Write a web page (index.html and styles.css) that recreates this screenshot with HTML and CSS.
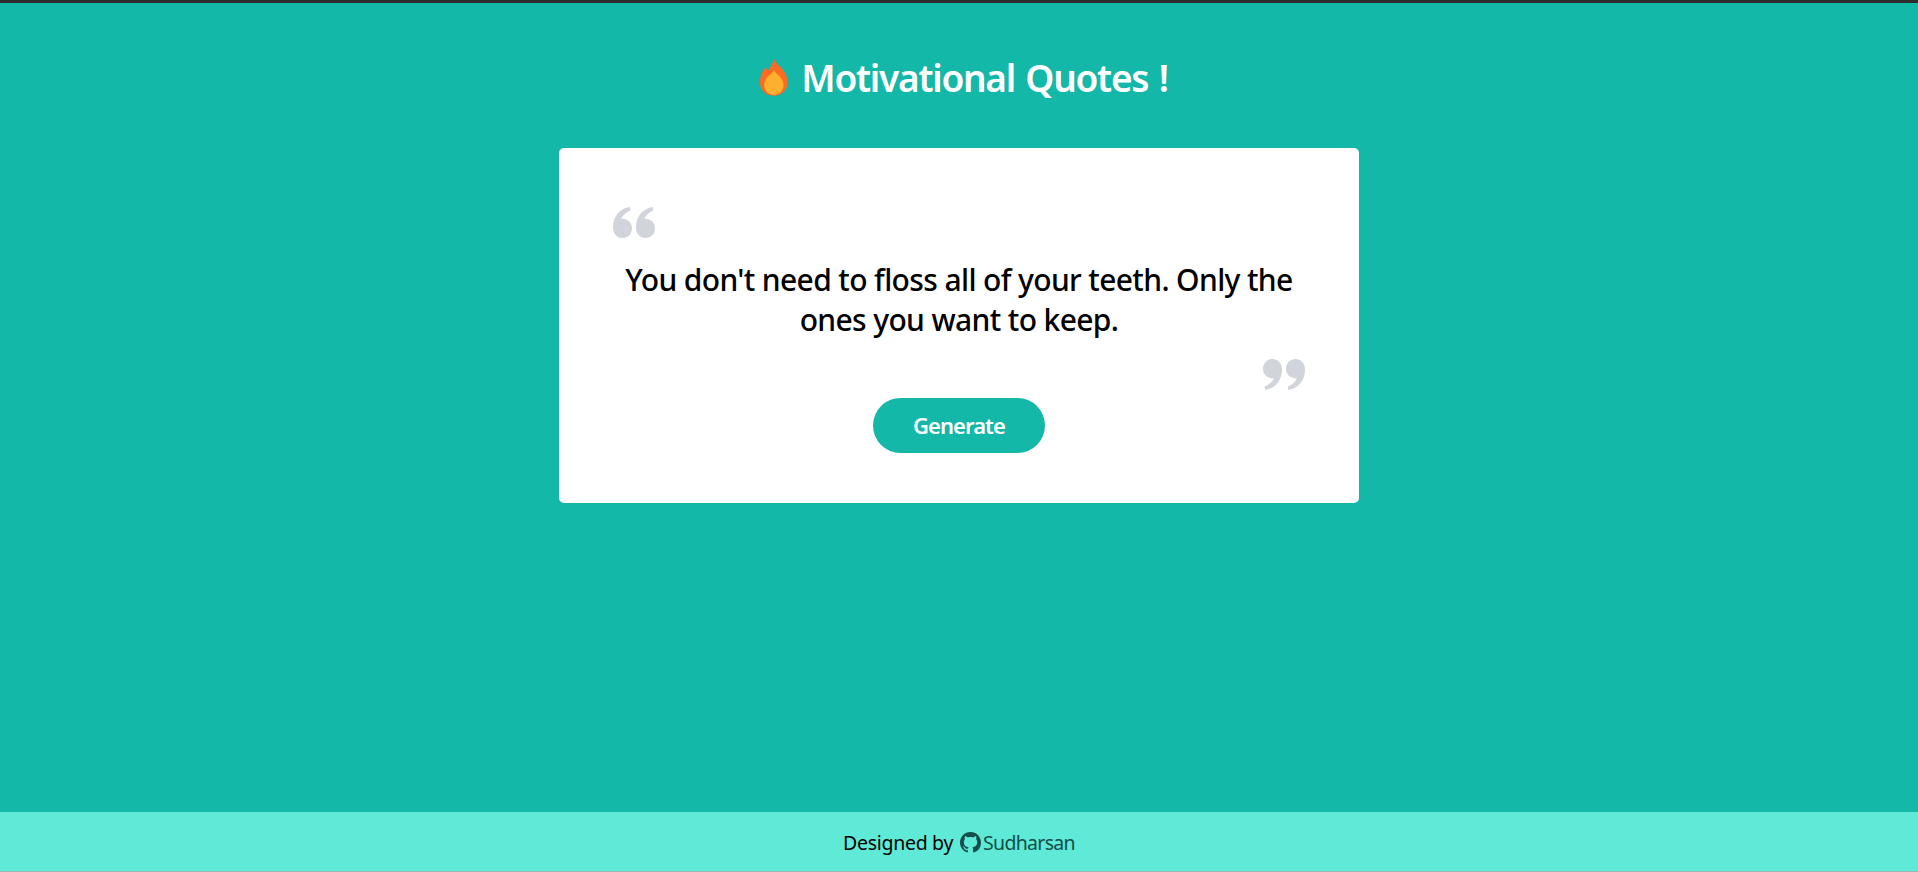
FILE: index.html
```html
<!DOCTYPE html>
<html lang="en">
<head>
<meta charset="utf-8">
<title>Motivational Quotes</title>
<link rel="stylesheet" href="styles.css">
</head>
<body>
<main class="page">
  <h1 class="title">
    <svg class="flame" viewBox="0 0 28 37"><path fill="#ff6a23" d="M14.2 0C15.5 6 27.5 10 27.5 23.500C27.500 31.500 21.500 36.700 13.700 36.700C6 36.700 0 31.500 0 23.500C0 17 2.500 11 6 8L7.300 12.500C9.500 10 12.500 5 14.200 0Z"/><path fill="#ffb02e" d="M14 11C15.500 15 23.500 18 23.500 26C23.500 32 19 35.800 13.800 35.800C8.500 35.800 4.200 32 4.200 26C4.200 18 12.500 15 14 11Z"/></svg>
    <span class="title-text">Motivational Quotes !</span>
  </h1>
  <section class="card">
    <svg class="mark" viewBox="0 0 42 31"><g id="quote"><path id="comma" d="M16.800 0L17.300 3.400C13 5 9.800 8 8.200 11.800C14 11.300 19 15 19 21.200C19 27 14.800 31 9.500 31C3.800 31 0 26.700 0 20.500C0 9.500 6.500 1.500 16.800 0Z"/><use href="#comma" x="23"/></g></svg>
    <p class="quote">You don't need to floss all of your teeth. Only the<br>ones you want to keep.</p>
    <svg class="mark mark-end" viewBox="0 0 42 31"><use href="#quote" transform="rotate(180 21 15.5)"/></svg>
    <button class="generate">Generate</button>
  </section>
</main>
<footer class="footer">
  <span class="by">Designed by</span>
  <a class="author"><svg class="github" viewBox="0 0 16 16"><path d="M8 0C3.58 0 0 3.58 0 8c0 3.54 2.290 6.530 5.470 7.590.4.070.55-.17.55-.38 0-.19-.01-.82-.01-1.490-2.010.37-2.530-.49-2.690-.94-.09-.23-.48-.94-.82-1.130-.28-.15-.68-.52-.01-.53.63-.01 1.080.58 1.230.82.72 1.210 1.870.87 2.330.66.070-.52.28-.87.51-1.070-1.780-.2-3.640-.89-3.640-3.950 0-.87.31-1.590.82-2.150-.08-.2-.36-1.020.08-2.120 0 0 .67-.21 2.200.82.64-.18 1.320-.27 2-.27s1.360.09 2 .27c1.530-1.040 2.200-.82 2.200-.82.44 1.100.16 1.920.08 2.120.51.56.82 1.270.82 2.150 0 3.070-1.870 3.750-3.650 3.950.29.25.54.73.54 1.480 0 1.070-.01 1.930-.01 2.200 0 .21.15.46.55.38A8.010 8.010 0 0 0 16 8c0-4.420-3.580-8-8-8z"/></svg><span class="name">Sudharsan</span></a>
</footer>
</body>
</html>
```
FILE: styles.css
```css
* { box-sizing: border-box; }
body {
  margin: 0;
  height: 872px;
  display: flex;
  flex-direction: column;
  overflow: hidden;
  background: #14b8a8;
  border-top: 3px solid #2d2d2d;
  font-family: "Segoe UI", "Noto Sans", sans-serif;
}
.page { flex: 1; display: flex; flex-direction: column; align-items: center; }
.title {
  display: flex;
  margin: 50px 0 0;
  padding-left: 10px;
  height: 50px;
  gap: 13px;
  color: #fff;
  font-size: 37px;
  line-height: 50px;
  font-weight: 600;
}
.flame { width: 28px; height: 37px; margin-top: 6px; }
.title-text { letter-spacing: -1.25px; word-spacing: 2px; white-space: nowrap; }
.card {
  width: 800px;
  height: 355px;
  margin-top: 45px;
  padding: 59px 54px 50px;
  display: flex;
  flex-direction: column;
  align-items: center;
  background: #fff;
  border-radius: 5px;
}
.mark { width: 42px; height: 31px; align-self: flex-start; fill: #d1d5db; }
.mark-end { align-self: flex-end; margin-top: 19px; }
.quote {
  margin: 22px 0 0;
  text-align: center;
  white-space: nowrap;
  font-size: 30px;
  line-height: 40px;
  font-weight: 500;
  letter-spacing: -0.63px;
}
.generate {
  width: 172px;
  height: 55px;
  flex-shrink: 0;
  margin-top: 8px;
  border: 0;
  border-radius: 28px;
  background: #14b8a8;
  color: #fff;
  font: 600 22px/35px "Segoe UI", "Noto Sans", sans-serif;
  letter-spacing: -0.95px;
}
.footer {
  height: 60px;
  display: flex;
  align-items: center;
  justify-content: center;
  gap: 7px;
  padding-top: 2px;
  background: #5eead6;
  border-bottom: 1px solid #9fb5b1;
  font-size: 19.5px;
  line-height: 30px;
}
.by { letter-spacing: -0.3px; }
.name { letter-spacing: -0.7px; }
.author { display: flex; align-items: center; gap: 2px; color: #134e4a; }
.github { width: 21px; height: 21px; fill: #134e4a; }
```
